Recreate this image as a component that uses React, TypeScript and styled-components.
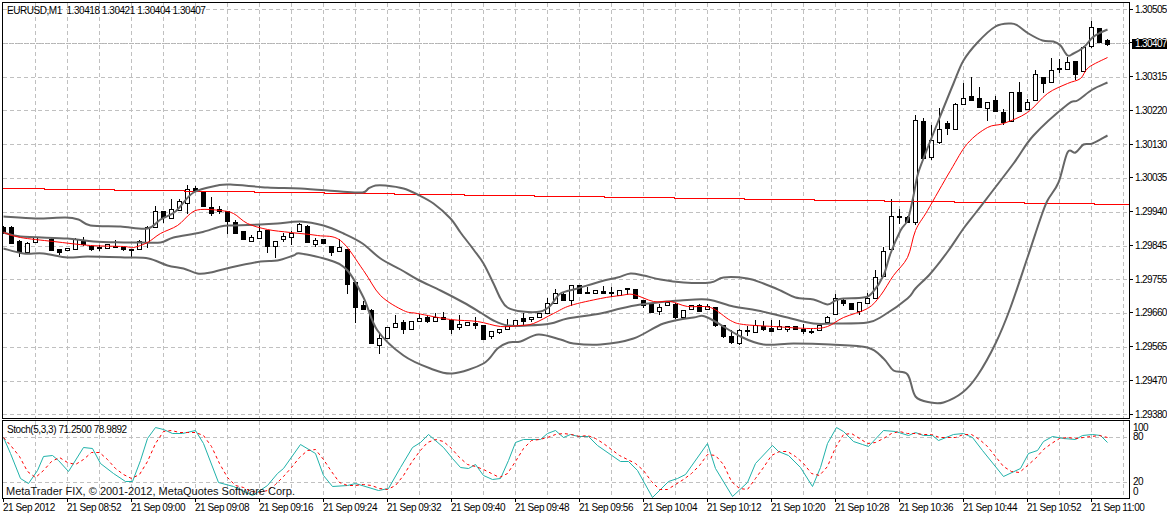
import React from "react";
import styled, { createGlobalStyle } from "styled-components";

type Pt = [number, number];
// hi, body top, body bottom, lo, filled (-1 = no bar drawn). Screen y, one bar every 8px from x=3
type Bar = [number, number, number, number, number];

const bars: Bar[] = [
  [226, 227, 232, 233, 1], [226, 227, 243, 243, 1], [240, 241, 252, 256, 1], [242, 243, 252, 252, 0],
  [237, 237, 242, 242, 0], [0, 0, 0, 0, -1], [238, 239, 250, 250, 1], [249, 249, 252, 254, 1],
  [248, 248, 250, 250, 0], [238, 239, 249, 249, 0], [237, 240, 244, 245, 1], [245, 246, 249, 250, 1],
  [245, 247, 248, 250, 1], [244, 244, 248, 248, 0], [240, 246, 247, 247, 1], [247, 247, 249, 250, 1],
  [249, 249, 250, 257, 1], [240, 241, 249, 249, 0], [226, 227, 242, 247, 0], [206, 211, 227, 227, 0],
  [211, 211, 217, 222, 1], [199, 209, 218, 218, 0], [199, 201, 210, 210, 0], [185, 189, 203, 213, 0],
  [186, 188, 191, 191, 1], [191, 191, 206, 206, 1], [197, 207, 213, 215, 1], [206, 209, 211, 213, 1],
  [211, 211, 221, 233, 1], [220, 222, 233, 233, 1], [231, 231, 239, 239, 1], [235, 237, 241, 241, 0],
  [224, 231, 238, 238, 0], [230, 230, 246, 252, 1], [241, 241, 246, 257, 0], [233, 236, 239, 241, 0],
  [231, 233, 237, 244, 0], [223, 224, 231, 231, 0], [225, 226, 242, 242, 1], [238, 240, 244, 246, 0],
  [239, 239, 243, 243, 1], [246, 246, 252, 255, 1], [239, 247, 251, 251, 0], [249, 249, 284, 293, 1],
  [282, 282, 307, 322, 1], [301, 305, 309, 309, 1], [309, 310, 343, 343, 1], [332, 338, 345, 353, 0],
  [327, 327, 338, 338, 0], [315, 323, 327, 327, 0], [320, 322, 329, 333, 1], [321, 321, 329, 329, 0],
  [314, 318, 321, 321, 0], [315, 317, 321, 322, 1], [313, 317, 321, 321, 0], [312, 317, 319, 319, 1],
  [319, 320, 329, 333, 1], [315, 324, 327, 329, 0], [322, 322, 325, 325, 0], [317, 323, 325, 328, 1],
  [325, 325, 339, 339, 1], [331, 331, 336, 338, 0], [329, 329, 332, 333, 0], [319, 326, 329, 329, 0],
  [320, 320, 325, 325, 0], [313, 318, 321, 324, 1], [317, 317, 319, 321, 0], [313, 313, 317, 317, 0],
  [298, 303, 313, 313, 0], [289, 293, 303, 303, 0], [293, 294, 300, 300, 1], [285, 285, 300, 305, 0],
  [285, 285, 293, 293, 1], [287, 292, 293, 293, 1], [290, 290, 293, 293, 0], [286, 291, 293, 293, 1],
  [287, 292, 293, 296, 1], [290, 290, 295, 295, 0], [288, 288, 289, 294, 1], [289, 289, 298, 298, 1],
  [300, 300, 305, 307, 1], [304, 304, 312, 312, 1], [304, 307, 311, 314, 0], [302, 302, 305, 305, 0],
  [303, 304, 317, 318, 1], [310, 310, 317, 317, 0], [305, 305, 309, 309, 0], [304, 305, 311, 311, 1],
  [304, 306, 309, 309, 0], [307, 307, 325, 326, 1], [325, 325, 336, 337, 1], [330, 336, 342, 343, 1],
  [329, 330, 343, 344, 0], [326, 330, 331, 335, 1], [320, 325, 332, 332, 0], [321, 326, 329, 330, 1],
  [320, 328, 331, 331, 1], [320, 326, 329, 329, 0], [326, 326, 329, 331, 0], [326, 326, 329, 329, 1],
  [324, 329, 331, 333, 1], [329, 331, 332, 333, 1], [325, 325, 330, 330, 0], [316, 317, 322, 322, 0],
  [294, 298, 314, 314, 0], [299, 300, 303, 305, 1], [303, 303, 309, 309, 1], [302, 302, 311, 314, 0],
  [293, 298, 303, 303, 0], [270, 277, 298, 298, 0], [247, 251, 276, 276, 0], [199, 216, 249, 249, 0],
  [209, 216, 217, 223, 1], [216, 217, 222, 222, 1], [115, 120, 222, 224, 0], [118, 121, 158, 158, 1],
  [125, 140, 157, 159, 0], [108, 129, 142, 143, 0], [121, 123, 128, 134, 1], [103, 104, 129, 129, 0],
  [83, 98, 104, 104, 0], [77, 96, 100, 100, 1], [87, 98, 107, 107, 1], [102, 102, 108, 120, 0],
  [96, 100, 111, 111, 1], [109, 112, 122, 124, 1], [92, 92, 121, 121, 0], [82, 92, 111, 111, 1],
  [99, 102, 109, 109, 0], [70, 74, 100, 100, 0], [77, 77, 83, 92, 1], [58, 70, 82, 82, 0],
  [59, 68, 69, 72, 1], [57, 62, 69, 69, 0], [61, 61, 74, 79, 1], [46, 47, 71, 71, 0],
  [21, 27, 46, 47, 0], [28, 28, 42, 42, 1], [39, 40, 44, 45, 1],
];

const upperBand: Pt[] = [
  [3, 216], [35, 218], [65, 217], [78, 219], [90, 225], [120, 226], [147, 228], [160, 219], [175, 211],
  [193, 192], [217, 185], [230, 184], [267, 187], [300, 188], [340, 191], [362, 192], [368, 188], [375, 185],
  [385, 185], [403, 188], [417, 194], [433, 203], [450, 218], [460, 232], [473, 249], [483, 263], [493, 283],
  [500, 298], [507, 307], [522, 311], [540, 311], [550, 305], [560, 293], [577, 288], [600, 281], [617, 277],
  [630, 273], [643, 275], [660, 279], [683, 282], [710, 282], [723, 277], [747, 278], [763, 283], [780, 290],
  [795, 297], [813, 299], [827, 304], [835, 300], [843, 298], [863, 297], [872, 292], [883, 275], [890, 253],
  [900, 230], [907, 220], [912, 200], [917, 175], [923, 158], [938, 120], [953, 83], [963, 60], [977, 42],
  [995, 26], [1010, 23], [1017, 25], [1028, 33], [1042, 40], [1053, 41], [1060, 45], [1067, 55], [1073, 53],
  [1083, 47], [1092, 37], [1100, 32], [1107, 29],
];

const midBand: Pt[] = [
  [3, 232], [20, 236], [67, 238], [93, 241], [123, 242], [140, 242], [160, 242], [173, 237], [200, 232],
  [220, 226], [233, 225], [260, 224], [277, 223], [300, 221], [323, 225], [343, 233], [362, 243], [380, 258],
  [400, 269], [417, 279], [440, 290], [463, 302], [480, 312], [493, 320], [507, 325], [527, 325], [550, 323],
  [567, 318], [600, 313], [620, 308], [640, 304], [657, 302], [680, 300], [707, 299], [733, 306], [757, 310],
  [787, 317], [813, 323], [833, 323], [867, 322], [883, 315], [907, 298], [915, 288], [930, 273], [948, 250],
  [963, 228], [977, 210], [1013, 163], [1033, 135], [1067, 104], [1077, 100], [1092, 89], [1107, 82],
];

const lowerBand: Pt[] = [
  [3, 248], [23, 253], [43, 253], [67, 257], [87, 256], [127, 257], [148, 258], [167, 265], [183, 268],
  [197, 273], [210, 272], [230, 267], [260, 261], [277, 260], [293, 255], [300, 253], [330, 260], [347, 270],
  [363, 297], [377, 330], [403, 355], [430, 368], [452, 373], [483, 363], [497, 348], [508, 342], [520, 341],
  [538, 334], [560, 339], [573, 343], [600, 344], [633, 338], [663, 323], [693, 317], [707, 317], [740, 336],
  [763, 344], [793, 343], [830, 344], [867, 347], [883, 358], [893, 370], [907, 374], [915, 396], [930, 402],
  [943, 402], [962, 392], [977, 375], [995, 343], [1010, 307], [1027, 257], [1040, 218], [1047, 200], [1058, 182],
  [1067, 152], [1075, 152], [1083, 144], [1092, 143], [1107, 135],
];

const redMa: Pt[] = [
  [3, 232], [20, 237], [53, 241], [90, 245], [123, 246], [133, 247], [147, 242], [160, 233], [177, 225],
  [190, 213], [200, 209], [220, 210], [233, 213], [247, 223], [267, 229], [290, 232], [317, 235], [340, 240],
  [363, 270], [380, 295], [403, 310], [417, 313], [450, 319], [477, 321], [500, 326], [520, 325], [533, 323],
  [553, 313], [570, 305], [600, 298], [620, 295], [633, 294], [653, 301], [670, 301], [687, 306], [710, 307],
  [730, 320], [743, 324], [773, 326], [810, 328], [827, 326], [843, 317], [867, 308], [880, 295], [893, 275],
  [907, 257], [915, 230], [927, 210], [950, 170], [967, 143], [987, 127], [1003, 123], [1027, 112], [1047, 93],
  [1067, 83], [1080, 78], [1088, 67], [1107, 57],
];

const stochMain: Pt[] = [
  [3, 437], [10, 453], [20, 478], [28, 483], [37, 470], [43, 456], [52, 455], [58, 460], [68, 471], [83, 447],
  [92, 448], [100, 463], [113, 473], [125, 481], [132, 481], [140, 460], [147, 438], [155, 427], [163, 429],
  [172, 433], [182, 433], [195, 430], [203, 443], [218, 482], [233, 486], [252, 495], [267, 485], [277, 473],
  [283, 468], [300, 444], [315, 453], [323, 475], [332, 486], [347, 485], [355, 483], [378, 490], [388, 488],
  [400, 467], [412, 447], [420, 442], [428, 434], [443, 447], [452, 458], [460, 467], [468, 468], [475, 464],
  [483, 475], [492, 479], [500, 478], [508, 460], [515, 442], [523, 439], [540, 439], [547, 433], [555, 430],
  [563, 437], [570, 434], [578, 436], [588, 436], [597, 445], [620, 461], [628, 461], [637, 470], [652, 497],
  [668, 481], [677, 478], [685, 474], [707, 443], [715, 468], [732, 496], [747, 482], [755, 463], [772, 445],
  [778, 451], [788, 455], [800, 467], [812, 486], [820, 467], [827, 443], [836, 427], [843, 431], [853, 441],
  [862, 444], [868, 446], [883, 430], [895, 431], [908, 435], [915, 432], [923, 435], [932, 435], [938, 440],
  [953, 434], [963, 433], [972, 437], [982, 450], [1003, 476], [1020, 468], [1028, 453], [1037, 450], [1043, 441],
  [1052, 436], [1063, 438], [1075, 439], [1082, 435], [1092, 434], [1100, 435], [1107, 442],
];

const priceLabels = [
  "1.30505", "1.30410", "1.30315", "1.30220", "1.30130", "1.30035", "1.29940",
  "1.29845", "1.29755", "1.29660", "1.29565", "1.29470", "1.29380",
];
const priceGrid = [9, 43, 77, 110, 144, 178, 212, 246, 279, 313, 347, 381, 414];
const stochLabels = [
  { text: "100", gap: 0 },
  { text: "80", gap: 1 },
  { text: "20", gap: 37 },
  { text: "0", gap: 2 },
];
const timeLabels = [
  "21 Sep 2012", "21 Sep 08:52", "21 Sep 09:00", "21 Sep 09:08", "21 Sep 09:16", "21 Sep 09:24",
  "21 Sep 09:32", "21 Sep 09:40", "21 Sep 09:48", "21 Sep 09:56", "21 Sep 10:04", "21 Sep 10:12",
  "21 Sep 10:20", "21 Sep 10:28", "21 Sep 10:36", "21 Sep 10:44", "21 Sep 10:52", "21 Sep 11:00",
];

const toPath = (pts: Pt[]) => pts.map(([x, y], i) => `${i ? "L" : "M"}${x + 0.5} ${y + 0.5}`).join("");

// catmull-rom through the read off points, the bands are smooth in the chart
const toCurve = (pts: Pt[]) => {
  let d = `M${pts[0][0] + 0.5} ${pts[0][1] + 0.5}`;
  for (let i = 0; i < pts.length - 1; i++) {
    const p0 = pts[Math.max(i - 1, 0)];
    const p1 = pts[i];
    const p2 = pts[i + 1];
    const p3 = pts[Math.min(i + 2, pts.length - 1)];
    const c1x = p1[0] + (p2[0] - p0[0]) / 6 + 0.5;
    const c1y = p1[1] + (p2[1] - p0[1]) / 6 + 0.5;
    const c2x = p2[0] - (p3[0] - p1[0]) / 6 + 0.5;
    const c2y = p2[1] - (p3[1] - p1[1]) / 6 + 0.5;
    d += `C${c1x.toFixed(1)} ${c1y.toFixed(1)} ${c2x.toFixed(1)} ${c2y.toFixed(1)} ${p2[0] + 0.5} ${p2[1] + 0.5}`;
  }
  return d;
};

const sampleAt = (pts: Pt[], x: number) => {
  for (let i = 1; i < pts.length; i++) {
    if (x <= pts[i][0]) {
      const [x0, y0] = pts[i - 1];
      const [x1, y1] = pts[i];
      return y0 + ((y1 - y0) * (x - x0)) / (x1 - x0);
    }
  }
  return pts[pts.length - 1][1];
};

// signal line is a 3 bar average of the main line
const stochSignal: Pt[] = bars.map((_, k) => {
  const from = Math.max(0, k - 2);
  let sum = 0;
  for (let j = from; j <= k; j++) sum += sampleAt(stochMain, 3 + 8 * j);
  return [3 + 8 * k, Math.round(sum / (k - from + 1))];
});

const longMa = (() => {
  let d = "M3 188.5";
  for (let y = 188; y <= 203; y++) {
    const end = 1094 - (203 - y) * 70;
    d += `L${end} ${y + 0.5}L${end} ${y + 1.5}`;
  }
  return d + "L1129 204.5";
})();

const verticals = Array.from({ length: 35 }, (_, i) => 35 + 32 * i);

const GlobalStyle = createGlobalStyle`
  html, body {
    margin: 0;
    background: #fff;
    overflow: hidden;
  }
`;

const Terminal = styled.div`
  display: flex;
  flex-direction: column;
  width: 1167px;
  height: 515px;
  padding: 2px 0 0 2px;
  box-sizing: border-box;
  font-family: "Liberation Sans", Arial, sans-serif;
  color: #000;
  overflow: hidden;
`;

const Row = styled.div<{ $height: number; $gap?: number }>`
  display: flex;
  flex: none;
  height: ${(p) => p.$height}px;
  margin-top: ${(p) => p.$gap || 0}px;
`;

const Plot = styled.div`
  position: relative;
  flex: none;
  width: 1128px;
  height: 100%;
  box-sizing: border-box;
  border: 1px solid #000;
`;

const PlotSvg = styled.svg`
  display: block;
  position: absolute;
  left: -1px;
  top: -1px;
`;

const PlotCaption = styled.div<{ $top: number }>`
  position: absolute;
  left: 4px;
  top: ${(p) => p.$top}px;
  font-size: 10px;
  line-height: 14px;
  letter-spacing: -0.45px;
  white-space: pre;
`;

const Copyright = styled.div`
  position: absolute;
  left: 3px;
  bottom: 0;
  font-size: 11px;
  line-height: 14px;
  white-space: pre;
  color: #111;
`;

const PriceScale = styled.div`
  position: relative;
  flex: none;
  width: 37px;
  box-sizing: border-box;
  padding: 3px 0 1px;
  display: flex;
  flex-direction: column;
  justify-content: space-between;
`;

const StochScale = styled.div`
  flex: none;
  width: 37px;
  box-sizing: border-box;
  padding: 3px 0 0 3px;
  display: flex;
  flex-direction: column;
`;

const ScaleItem = styled.div<{ $gap?: number }>`
  display: flex;
  align-items: center;
  height: 8px;
  margin-top: ${(p) => p.$gap || 0}px;
  font-size: 10px;
  letter-spacing: -0.62px;
  white-space: nowrap;
`;

const Tick = styled.span`
  flex: none;
  width: 3px;
  height: 1px;
  margin-right: 2px;
  background: #000;
`;

const PriceBadge = styled.div`
  position: absolute;
  left: 2px;
  right: 0;
  top: 37px;
  height: 10px;
  padding-left: 3px;
  background: #000;
  color: #fff;
  font-size: 10px;
  line-height: 10px;
  letter-spacing: -0.62px;
`;

const TimeScale = styled.div`
  display: flex;
  flex: none;
  padding-left: 1px;
`;

const TimeCell = styled.div`
  flex: none;
  width: 64px;
  font-size: 10px;
  line-height: 12px;
  letter-spacing: -0.45px;
  white-space: nowrap;
  &::before {
    content: "";
    display: block;
    width: 1px;
    height: 3px;
    background: #000;
  }
`;

function Grid({ rows, top, bottom }: { rows: number[]; top: number; bottom: number }) {
  const h = rows.map((y) => `M3 ${y + 0.5}H1129`).join("");
  const v = verticals.map((x) => `M${x + 0.5} ${top}V${bottom}`).join("");
  return <path d={h + v} stroke="#c0c0c0" strokeWidth={1} strokeDasharray="4 3" fill="none" shapeRendering="crispEdges" />;
}

function Candle({ bar, index }: { bar: Bar; index: number }) {
  const [hi, top, bottom, lo, filled] = bar;
  if (filled < 0) return null;
  const x = 3 + 8 * index;
  return (
    <g shapeRendering="crispEdges">
      <path d={`M${x + 0.5} ${hi}V${lo + 1}`} stroke="#000" fill="none" />
      <rect
        x={x - 1.5}
        y={top + 0.5}
        width={4}
        height={Math.max(bottom - top, 1)}
        fill={filled ? "#000" : "#fff"}
        stroke="#000"
      />
    </g>
  );
}

export default function App() {
  return (
    <Terminal>
      <GlobalStyle />
      <Row $height={417}>
        <Plot>
          <PlotSvg width={1128} height={417} viewBox="2 2 1128 417">
            <Grid rows={priceGrid} top={3} bottom={418} />
            <path d="M3 43.5H1129" stroke="#b4b4b4" strokeDasharray="2 1" fill="none" shapeRendering="crispEdges" />
            {bars.map((bar, i) => (
              <Candle key={i} bar={bar} index={i} />
            ))}
            <path d={longMa} stroke="#f00" fill="none" shapeRendering="crispEdges" />
            <path d={toCurve(upperBand)} stroke="#666" strokeWidth={2} fill="none" />
            <path d={toCurve(midBand)} stroke="#666" strokeWidth={2} fill="none" />
            <path d={toCurve(lowerBand)} stroke="#666" strokeWidth={2} fill="none" />
            <path d={toCurve(redMa)} stroke="#f00" strokeWidth={1} fill="none" />
          </PlotSvg>
          <PlotCaption $top={1}>EURUSD,M1  1.30418 1.30421 1.30404 1.30407</PlotCaption>
        </Plot>
        <PriceScale>
          {priceLabels.map((label) => (
            <ScaleItem key={label}>
              <Tick />
              {label}
            </ScaleItem>
          ))}
          <PriceBadge>1.30407</PriceBadge>
        </PriceScale>
      </Row>
      <Row $height={79} $gap={1}>
        <Plot>
          <PlotSvg width={1128} height={79} viewBox="2 420 1128 79">
            <Grid rows={[437, 482]} top={421} bottom={498} />
            <path d={toPath(stochMain)} stroke="#20b2aa" strokeWidth={1} fill="none" strokeLinejoin="round" />
            <path d={toPath(stochSignal)} stroke="#f00" strokeWidth={1} strokeDasharray="3 3" fill="none" />
          </PlotSvg>
          <PlotCaption $top={2}>Stoch(5,3,3) 71.2500 78.9892</PlotCaption>
          <Copyright>MetaTrader FIX, © 2001-2012, MetaQuotes Software Corp.</Copyright>
        </Plot>
        <StochScale>
          {stochLabels.map((item) => (
            <ScaleItem key={item.text} $gap={item.gap}>
              {item.text}
            </ScaleItem>
          ))}
        </StochScale>
      </Row>
      <TimeScale>
        {timeLabels.map((label) => (
          <TimeCell key={label}>{label}</TimeCell>
        ))}
      </TimeScale>
    </Terminal>
  );
}
